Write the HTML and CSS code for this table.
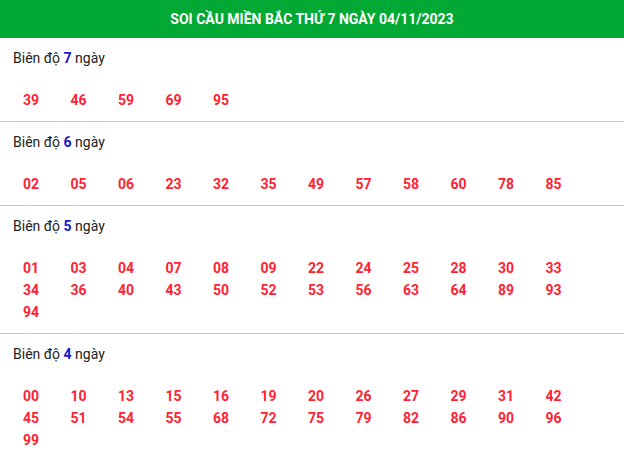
FILE: index.html
```html
<!DOCTYPE html>
<html lang="vi">
<head>
  <meta charset="UTF-8" />
  <meta name="viewport" content="width=device-width, initial-scale=1.0"/>
  <title>Soi cầu miền Bắc</title>
  <link rel="stylesheet" href="styles.css">
</head>
<body>

<div class="box">
  <h2 class="box-title">SOI CẦU MIỀN BẮC THỨ 7 NGÀY 04/11/2023</h2>

  <div class="group">
    <div class="group-title">Biên độ <b>7</b> ngày</div>
    <div class="nums">
      <span>39</span><span>46</span><span>59</span><span>69</span><span>95</span>
    </div>
  </div>

  <div class="group">
    <div class="group-title">Biên độ <b>6</b> ngày</div>
    <div class="nums">
      <span>02</span><span>05</span><span>06</span><span>23</span><span>32</span><span>35</span>
      <span>49</span><span>57</span><span>58</span><span>60</span><span>78</span><span>85</span>
    </div>
  </div>

  <div class="group">
    <div class="group-title">Biên độ <b>5</b> ngày</div>
    <div class="nums">
      <span>01</span><span>03</span><span>04</span><span>07</span><span>08</span><span>09</span>
      <span>22</span><span>24</span><span>25</span><span>28</span><span>30</span><span>33</span>
      <span>34</span><span>36</span><span>40</span><span>43</span><span>50</span><span>52</span>
      <span>53</span><span>56</span><span>63</span><span>64</span><span>89</span><span>93</span>
      <span>94</span>
    </div>
  </div>

  <div class="group">
    <div class="group-title">Biên độ <b>4</b> ngày</div>
    <div class="nums">
      <span>00</span><span>10</span><span>13</span><span>15</span><span>16</span><span>19</span>
      <span>20</span><span>26</span><span>27</span><span>29</span><span>31</span><span>42</span>
      <span>45</span><span>51</span><span>54</span><span>55</span><span>68</span><span>72</span>
      <span>75</span><span>79</span><span>82</span><span>86</span><span>90</span><span>96</span>
      <span>99</span>
    </div>
  </div>
</div>

</body>
</html>
```

FILE: styles.css
```css
:root {
  --green: #00a933;
  --red: #ff2233;
  --blue: #1515d0;
  --text: #222;
  --line: #c8c8c8;
}

body {
  margin: 0;
  font-family: Roboto, 'Liberation Sans', sans-serif;
  font-size: 14px;
  color: var(--text);
  background: #fff;
}

.box-title {
  margin: 0;
  height: 38px;
  line-height: 38px;
  background: var(--green);
  color: #fff;
  font-size: 14px;
  font-weight: bold;
  text-align: center;
}

.group {
  padding: 10px 0 10px 13px;
  border-bottom: 1px solid var(--line);
}

.group:last-child {
  border-bottom: none;
}

.group-title {
  line-height: 20px;
}

.group-title b {
  color: var(--blue);
}

.nums {
  display: grid;
  grid-template-columns: repeat(12, 47.5px);
  margin: 21px 0 0 10px;
}

.nums span {
  line-height: 22px;
  font-weight: bold;
  color: var(--red);
}
```
